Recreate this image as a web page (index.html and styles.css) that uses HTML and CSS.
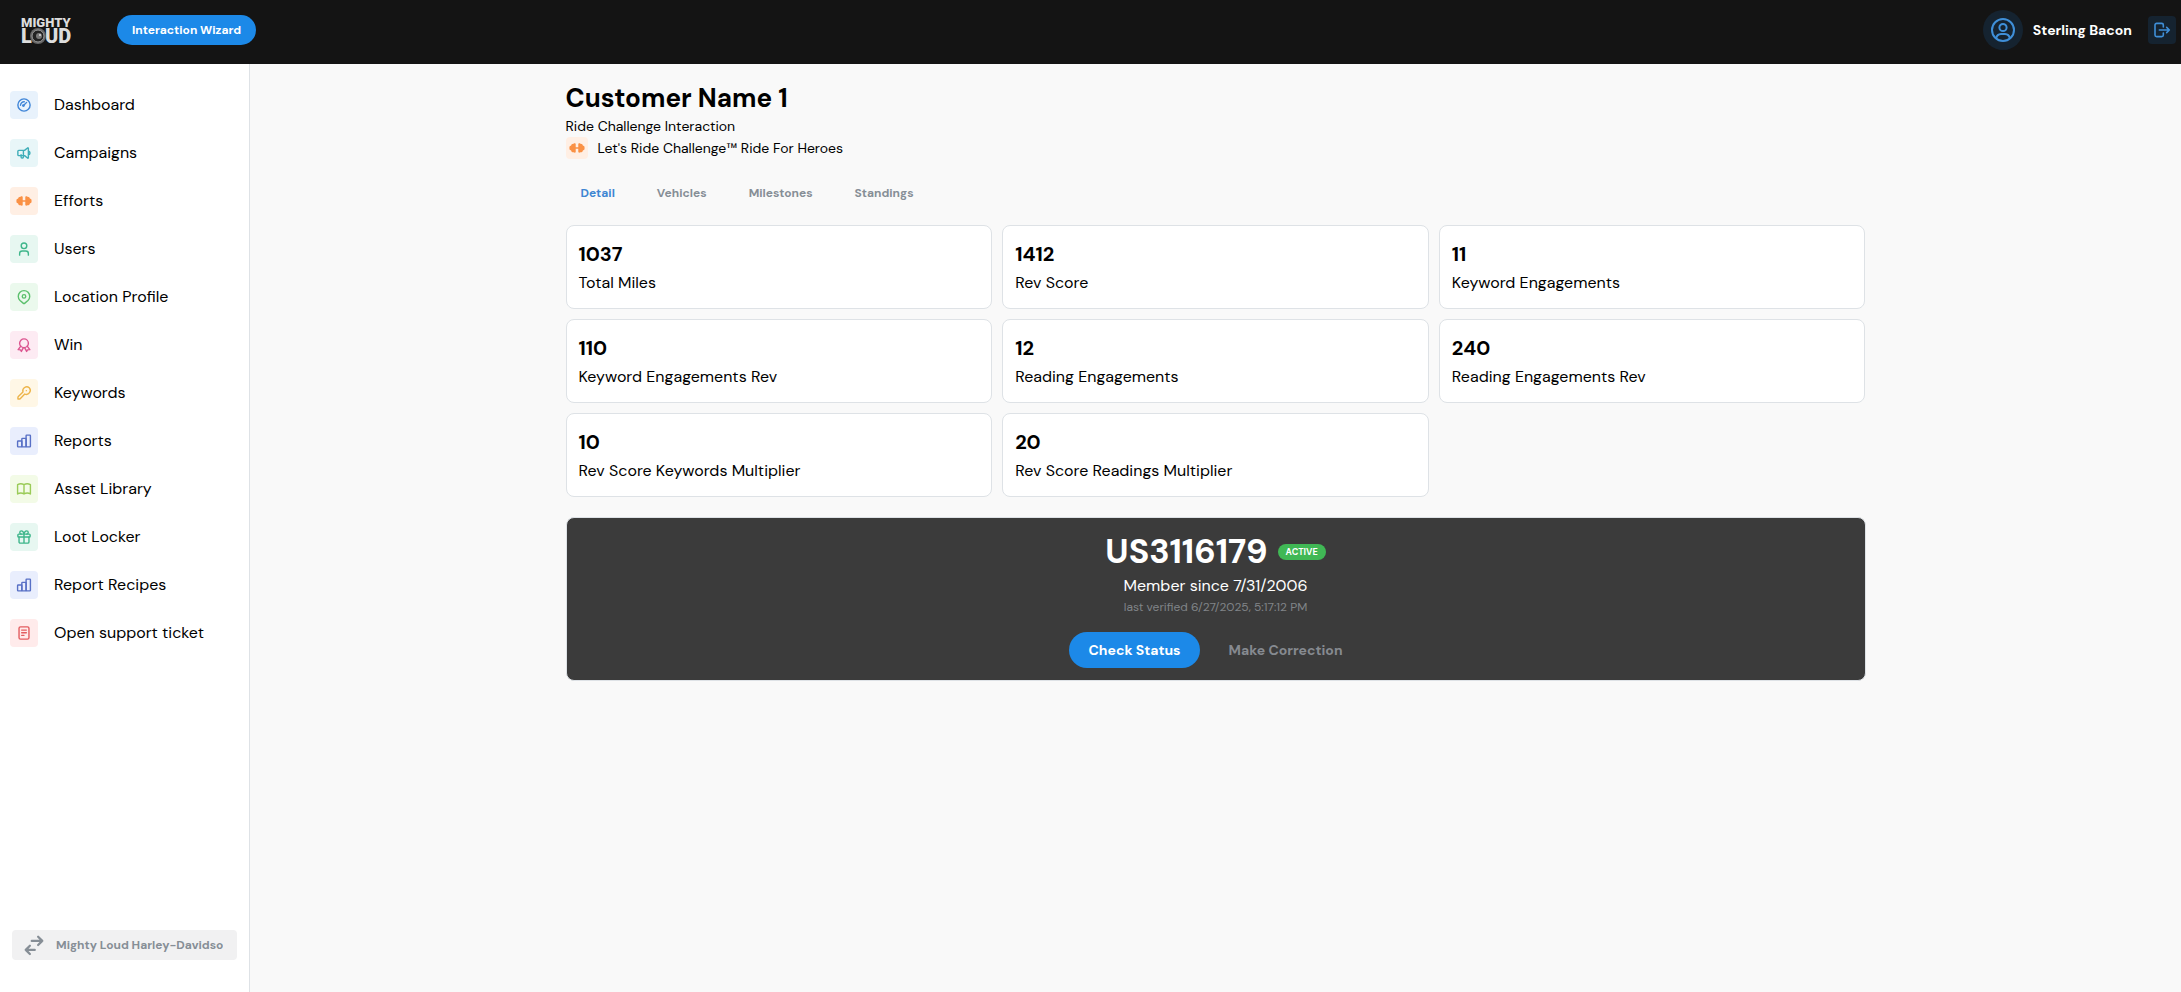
FILE: index.html
```html
<!DOCTYPE html>
<html lang="en">
<head>
<meta charset="utf-8">
<meta name="viewport" content="width=device-width, initial-scale=1">
<title>Customer Name 1</title>
<link rel="stylesheet" href="styles.css">
</head>
<body>
<svg class="sprite" aria-hidden="true">
  <symbol id="i-gauge" viewBox="0 0 24 24"><circle cx="12" cy="12" r="10.500"/><circle cx="11" cy="13" r="1.300"/><path d="M12 12l4.500-4.500M6 12.500A6 6 0 0 1 12.500 6.500"/></symbol>
  <symbol id="i-horn" viewBox="0 0 24 24"><path d="M19.500 8.500a3.600 3.600 0 0 1 0 7M11 7.500v11.500a1.500 1.500 0 0 1-1.500 1.500H8.500A1.500 1.500 0 0 1 7 19v-4M13 7.500l5-4.200a.9.900 0 0 1 1.500.700v16a.9.900 0 0 1-1.500.700l-5-4.200H3a1.500 1.500 0 0 1-1.500-1.500v-6A1.500 1.500 0 0 1 3 7.500z"/></symbol>
  <symbol id="i-barbell" viewBox="0 0 24 24"><path class="solid" d="M9.800 5.500v13c0 1.800-2.400 2-3.600.900C3.500 19.600 2 18 2 16.300-.8 15.500-1.500 13.500-.8 12c-.7-1.500 0-3.500 2.800-4.300C2 6 3.500 4.400 6.200 4.600c1.200-1.100 3.600-.9 3.600.900zM14.200 5.500v13c0 1.800 2.400 2 3.600.900 2.700.200 4.200-1.400 4.200-3.100 2.800-.8 3.500-2.800 2.800-4.300.7-1.500 0-3.500-2.800-4.300 0-1.700-1.500-3.300-4.200-3.100-1.200-1.100-3.600-.9-3.600.900z"/><path d="M9 12h6"/></symbol>
  <symbol id="i-user" viewBox="0 0 24 24"><circle cx="12" cy="6.500" r="4.800"/><path d="M4.500 22.500v-2.500a4.500 4.500 0 0 1 4.500-4.500h6a4.500 4.500 0 0 1 4.500 4.500v2.500"/></symbol>
  <symbol id="i-pin" viewBox="0 0 24 24"><circle cx="12" cy="11" r="3"/><path d="M18.800 18L13.500 22.500a2.200 2.200 0 0 1-3 0L5.200 18a9.800 9.800 0 1 1 13.600 0z"/></symbol>
  <symbol id="i-award" viewBox="0 0 24 24"><circle cx="12" cy="9" r="7.500"/><path d="M6.500 14l-4.500 6 4 .300L7.500 23l3.500-6.500M17.500 14l4.500 6-4 .300-1.500 2.700-3.500-6.500"/></symbol>
  <symbol id="i-key" viewBox="0 0 24 24"><path d="M21 3a6.800 6.800 0 0 1-7.700 10.800L5.500 21.700a2.500 2.500 0 0 1-1.700.700H1.600v-2.800a2.500 2.500 0 0 1 .7-1.700l7.900-7.800A6.800 6.800 0 0 1 21 3zM16 8h.01"/></symbol>
  <symbol id="i-chart" viewBox="0 0 24 24"><rect x="1" y="12" width="7.300" height="10" rx="1"/><rect x="8.300" y="7.500" width="7.300" height="14.500" rx="1"/><rect x="15.600" y="2" width="7.400" height="20" rx="1"/></symbol>
  <symbol id="i-book" viewBox="0 0 24 24"><path d="M1 20.500a11 11 0 0 1 11 0 11 11 0 0 1 11 0M1 4.500a11 11 0 0 1 11 0 11 11 0 0 1 11 0M1 4.500v16M12 4.500v16M23 4.500v16"/></symbol>
  <symbol id="i-gift" viewBox="0 0 24 24"><rect x="1.500" y="7" width="21" height="5" rx="1.500"/><path d="M12 7v15.500M20.500 12v8.500a2 2 0 0 1-2 2h-13a2 2 0 0 1-2-2V12M7.500 7a2.700 2.700 0 0 1 0-5.500C10 1.500 11.500 4 12 7c.500-3 2-5.500 4.500-5.500a2.700 2.700 0 0 1 0 5.500"/></symbol>
  <symbol id="i-receipt" viewBox="0 0 24 24"><rect x="3.500" y="1.500" width="17" height="21" rx="2.500"/><path d="M8 7h8M8 11.500h8M8 16h4"/></symbol>
  <symbol id="i-person" viewBox="0 0 24 24"><circle cx="12" cy="12" r="11"/><circle cx="12" cy="9.500" r="3.600"/><path d="M5.200 20a5.200 5.200 0 0 1 4.800-4h4a5.200 5.200 0 0 1 4.800 4"/></symbol>
  <symbol id="i-logout" viewBox="0 0 24 24"><path d="M14 7.500V4.500A2.500 2.500 0 0 0 11.500 2H4A2.500 2.500 0 0 0 1.500 4.500v15A2.500 2.500 0 0 0 4 22h7.500a2.500 2.500 0 0 0 2.500-2.500v-3M8 12h15M19 8l4 4-4 4"/></symbol>
  <symbol id="i-swap" viewBox="0 0 24 24"><path d="M9 6.500h14M17.500 1l5.500 5.500-5.500 5.500M13 18.500H1M6.500 13L1 18.500 6.500 24"/></symbol>
</svg>

<header class="topbar">
  <a class="logo" href="#" aria-label="Mighty Loud">
    <svg width="50" height="28" viewBox="0 0 50 28">
      <text class="logo-small" x="0" y="11">MIGHTY</text>
      <text class="logo-large" x="0" y="27">L</text>
      <text class="logo-large" x="24" y="27">UD</text>
      <circle cx="17" cy="20" r="8" fill="#666"/>
      <circle cx="17" cy="20" r="6" fill="#222" stroke="#999"/>
      <circle cx="18" cy="20" r="3" fill="#777"/>
      <circle cx="19" cy="19" r="1" fill="#ddd"/>
    </svg>
  </a>
  <button class="btn btn-small" type="button">Interaction Wizard</button>
  <div class="account">
    <span class="avatar"><svg class="icon icon-lg"><use href="#i-person"/></svg></span>
    <span class="account-name">Sterling Bacon</span>
    <button class="logout" type="button" aria-label="Log out"><svg class="icon icon-md"><use href="#i-logout"/></svg></button>
  </div>
</header>

<div class="shell">
  <aside class="sidebar">
    <nav class="nav">
      <a href="#"><span class="tile blue"><svg class="icon"><use href="#i-gauge"/></svg></span>Dashboard</a>
      <a href="#"><span class="tile cyan"><svg class="icon"><use href="#i-horn"/></svg></span>Campaigns</a>
      <a href="#"><span class="tile orange"><svg class="icon"><use href="#i-barbell"/></svg></span>Efforts</a>
      <a href="#"><span class="tile teal"><svg class="icon"><use href="#i-user"/></svg></span>Users</a>
      <a href="#"><span class="tile green"><svg class="icon"><use href="#i-pin"/></svg></span>Location Profile</a>
      <a href="#"><span class="tile pink"><svg class="icon"><use href="#i-award"/></svg></span>Win</a>
      <a href="#"><span class="tile yellow"><svg class="icon"><use href="#i-key"/></svg></span>Keywords</a>
      <a href="#"><span class="tile indigo"><svg class="icon"><use href="#i-chart"/></svg></span>Reports</a>
      <a href="#"><span class="tile lime"><svg class="icon"><use href="#i-book"/></svg></span>Asset Library</a>
      <a href="#"><span class="tile teal"><svg class="icon"><use href="#i-gift"/></svg></span>Loot Locker</a>
      <a href="#"><span class="tile indigo"><svg class="icon"><use href="#i-chart"/></svg></span>Report Recipes</a>
      <a href="#"><span class="tile red"><svg class="icon"><use href="#i-receipt"/></svg></span>Open support ticket</a>
    </nav>
    <label class="switcher">
      <svg class="icon icon-sw"><use href="#i-swap"/></svg>
      <input type="text" aria-label="Location" value="Mighty Loud Harley-Davidson" readonly>
    </label>
  </aside>

  <main class="main">
    <div class="content">
      <h1>Customer Name 1</h1>
      <p class="sub">Ride Challenge Interaction</p>
      <p class="sub challenge"><span class="tile tile-sm orange"><svg class="icon"><use href="#i-barbell"/></svg></span>Let's Ride Challenge™ Ride For Heroes</p>
      <div class="tabs" role="tablist">
        <button type="button" role="tab" aria-selected="true">Detail</button>
        <button type="button" role="tab" aria-selected="false">Vehicles</button>
        <button type="button" role="tab" aria-selected="false">Milestones</button>
        <button type="button" role="tab" aria-selected="false">Standings</button>
      </div>
      <section class="stats">
        <div class="card"><strong>1037</strong><span>Total Miles</span></div>
        <div class="card"><strong>1412</strong><span>Rev Score</span></div>
        <div class="card"><strong>11</strong><span>Keyword Engagements</span></div>
        <div class="card"><strong>110</strong><span>Keyword Engagements Rev</span></div>
        <div class="card"><strong>12</strong><span>Reading Engagements</span></div>
        <div class="card"><strong>240</strong><span>Reading Engagements Rev</span></div>
        <div class="card"><strong>10</strong><span>Rev Score Keywords Multiplier</span></div>
        <div class="card"><strong>20</strong><span>Rev Score Readings Multiplier</span></div>
      </section>
      <section class="member">
        <div class="member-head"><h2>US3116179</h2><span class="badge">ACTIVE</span></div>
        <p class="since">Member since 7/31/2006</p>
        <p class="verified">last verified 6/27/2025, 5:17:12 PM</p>
        <div class="actions">
          <button class="btn" type="button">Check Status</button>
          <button class="btn btn-plain" type="button">Make Correction</button>
        </div>
      </section>
    </div>
  </main>
</div>
</body>
</html>
```

FILE: styles.css
```css
* { box-sizing: border-box; }
body {
  margin: 0;
  min-height: 100vh;
  display: flex;
  flex-direction: column;
  font-family: "DM Sans", Inter, sans-serif;
  font-size: 16px;
  line-height: 24px;
  color: #000;
  background: #f9f9f9;
}
h1, h2, p { margin: 0; }
button, input { font: inherit; border: 0; background: none; }
a { color: inherit; text-decoration: none; }
.sprite { position: absolute; width: 0; height: 0; }
.icon {
  width: 14px;
  height: 14px;
  fill: none;
  stroke: currentColor;
  stroke-width: 2.4;
  stroke-linecap: round;
  stroke-linejoin: round;
  overflow: visible;
}
symbol { overflow: visible; }
.icon-md { width: 16px; height: 16px; }
.icon-lg { width: 24px; height: 24px; stroke-width: 2; }
.solid { fill: currentColor; stroke: none; }

.topbar {
  display: flex;
  align-items: center;
  height: 64px;
  padding: 0 5px 4px 21px;
  background: #141414;
  color: #fff;
}
.logo { display: flex; margin-right: 46px; }
.logo svg { overflow: visible; fill: #ddd; }
.logo-small { font: 900 13px Roboto, sans-serif; }
.logo-large { font: 900 20px Roboto, sans-serif; }
.btn {
  height: 36px;
  padding: 0 19px;
  border-radius: 18px;
  background: #1c89e8;
  color: #fff;
  font-size: 14px;
  font-weight: 700;
}
.btn-small { height: 30px; padding: 0 15px; font-size: 12px; line-height: 16px; }
.btn-plain { background: none; color: #868a90; }
.account { display: flex; align-items: center; margin-left: auto; }
.avatar {
  display: grid;
  place-items: center;
  width: 40px;
  height: 40px;
  border-radius: 50%;
  background: #152330;
  color: #3f8fd8;
}
.account-name { margin: 0 16px 0 10px; font-size: 14px; font-weight: 700; }
.logout {
  display: grid;
  place-items: center;
  width: 28px;
  height: 28px;
  padding: 0;
  border-radius: 4px;
  background: #152330;
  color: #3f8fd8;
}

.shell { display: flex; flex: 1; }
.sidebar {
  display: flex;
  flex-direction: column;
  justify-content: space-between;
  flex: 0 0 250px;
  padding: 17px 12px 32px 10px;
  border-right: 1px solid #dee2e6;
  background: #fff;
}
.nav a { display: flex; align-items: center; gap: 16px; height: 48px; }
.tile {
  display: grid;
  place-items: center;
  flex: none;
  width: 28px;
  height: 28px;
  border-radius: 4px;
}
.tile-sm { width: 22px; height: 22px; }
.blue { background: #e8f2fc; color: #4086d8; }
.cyan { background: #e8f6f8; color: #3eadb8; }
.orange { background: #ffefe4; color: #fa9145; }
.teal { background: #e7f7f1; color: #3fb68b; }
.green { background: #ebf9ed; color: #5bc06c; }
.pink { background: #fdebf3; color: #dc5590; }
.yellow { background: #fff7e6; color: #edb44a; }
.indigo { background: #e9eefd; color: #5870c6; }
.lime { background: #f3fbe7; color: #9acb58; }
.red { background: #ffebeb; color: #e35d60; }
.switcher {
  display: flex;
  align-items: center;
  gap: 13px;
  height: 30px;
  margin-left: 2px;
  padding: 0 14px 0 13px;
  border-radius: 4px;
  background: #f1f1f2;
  color: #868e96;
}
.switcher input {
  flex: 1;
  min-width: 0;
  padding: 0;
  color: inherit;
  font-size: 12px;
  font-weight: 700;
  outline: 0;
}
.icon-sw { flex: none; width: 18px; height: 20px; stroke-width: 3; }

.main { flex: 1; padding: 17px 24px; }
.content { max-width: 1300px; margin: 0 auto; }
h1 { font-size: 26px; line-height: 34px; font-weight: 700; }
.sub { font-size: 14px; line-height: 22px; }
.challenge { display: flex; align-items: center; gap: 10px; }
.tabs { display: flex; gap: 12px; margin: 17px 0 16px; }
.tabs button {
  height: 33px;
  padding: 0 15px;
  color: #868e96;
  font-size: 12px;
  font-weight: 700;
}
.tabs [aria-selected="true"] { color: #3f86d2; }
.stats {
  display: grid;
  grid-template-columns: repeat(3, 1fr);
  gap: 10px;
}
.card {
  display: flex;
  flex-direction: column;
  gap: 3px;
  padding: 14px 12px 13px;
  border: 1px solid #dee2e6;
  border-radius: 8px;
  background: #fff;
}
.card strong { font-size: 20px; line-height: 28px; }
.member {
  display: flex;
  flex-direction: column;
  align-items: center;
  margin-top: 20px;
  padding: 13px 12px 12px;
  border: 1px solid #dee2e6;
  border-radius: 8px;
  background: #3b3b3b;
  color: #fff;
}
.member-head { display: flex; align-items: center; gap: 10px; }
h2 { font-size: 34px; line-height: 42px; font-weight: 700; }
.badge {
  padding: 0 8px;
  border-radius: 8px;
  background: #40b855;
  font-size: 9px;
  line-height: 16px;
  font-weight: 700;
}
.since { line-height: 25px; }
.verified { color: #808488; font-size: 12px; line-height: 18px; }
.actions { display: flex; gap: 10px; margin-top: 16px; }
```
